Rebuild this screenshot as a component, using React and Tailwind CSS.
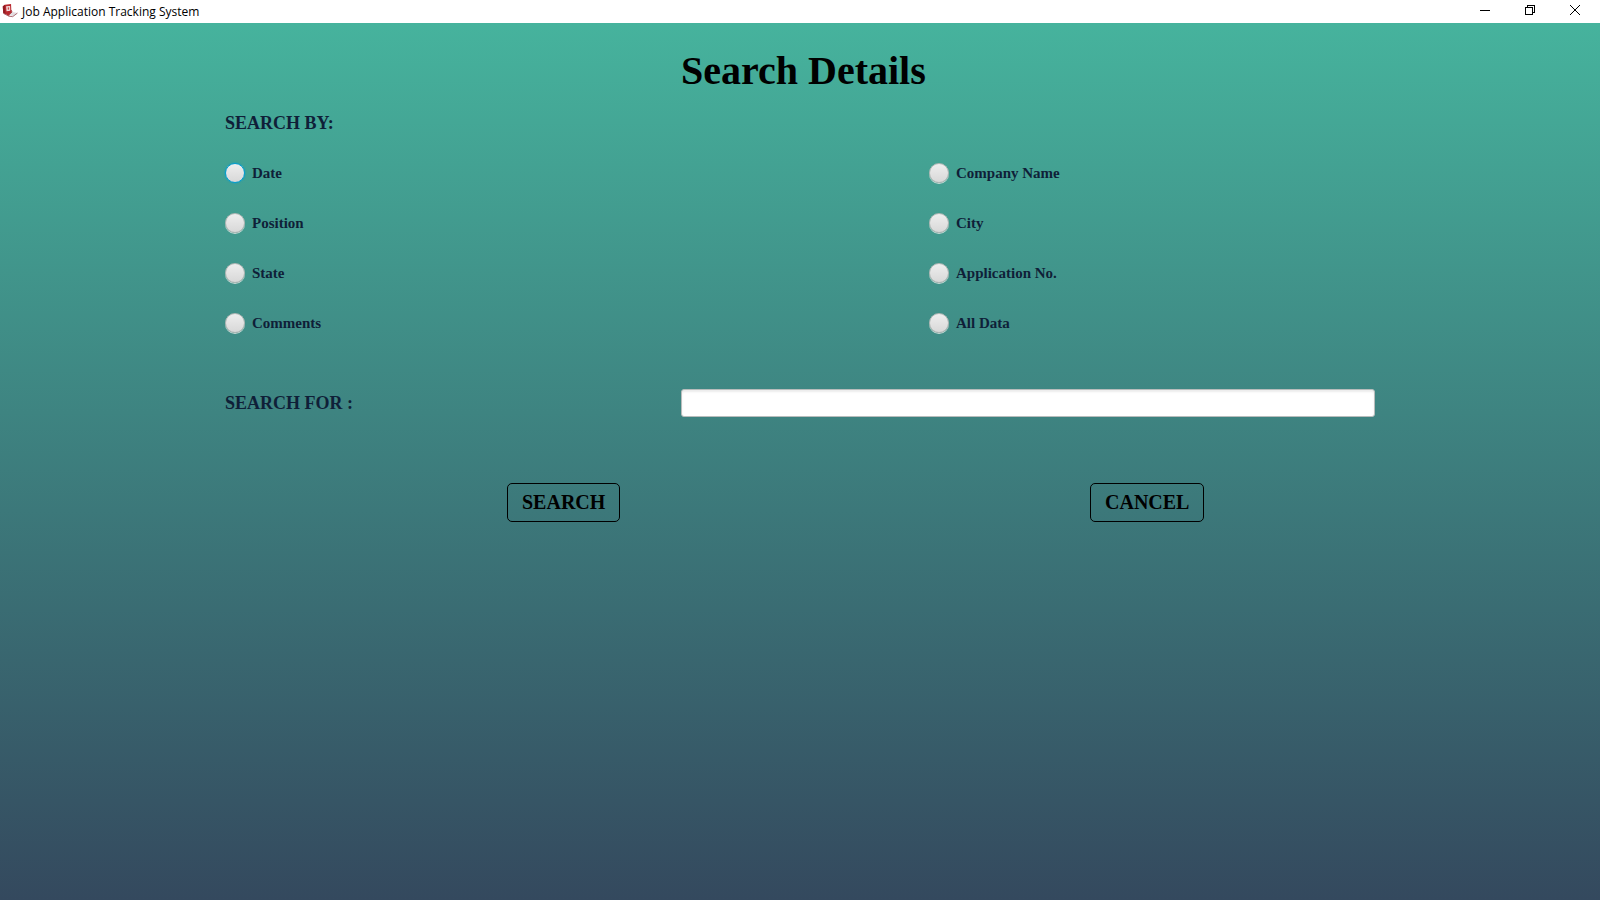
import React from "react";

const fields = [
  "Date",
  "Company Name",
  "Position",
  "City",
  "State",
  "Application No.",
  "Comments",
  "All Data",
];

function AppIcon() {
  return (
    <svg width="16" height="16" viewBox="0 0 17 16" className="-mt-[2px]" aria-hidden="true">
      <path d="M.8 3.2 3 1.4l6.6-.8.4 9.2-2.6 3.6L1.4 10.4Z" fill="#b8282e" />
      <path d="M.8 3.2 3 1.4l.6 10-2.2-1Z" fill="#8f1b22" />
      <path d="M4.4 3l4.2-.4.2 5.2-4 .4Z" fill="#f3dede" />
      <path d="M6 4.2l1.6-.2v2.4l-1.4.2Z" fill="#c9474c" />
      <path d="M7.2 12 10.8 8.8l5.6 1.4-4.8 3.4Z" fill="#e2dcdf" />
      <path d="M2 10.8l5.4 2.8 4 .4 5-3.8" fill="none" stroke="#a8686f" strokeWidth="1" />
      <path d="M9.6 7l1 2-3.4 3.2" fill="none" stroke="#a3252c" strokeWidth="1" />
    </svg>
  );
}

function TitleBar() {
  const control = "flex h-full w-[45px] items-center justify-center";
  return (
    <header className="flex h-[23px] items-center bg-white pl-[2px] text-black">
      <AppIcon />
      <span className="ml-[4px] flex-1 font-['Open_Sans','Noto_Sans',sans-serif] text-[12px] leading-[22px] font-normal">
        Job Application Tracking System
      </span>
      <div className="flex h-full pr-[3px] pb-[3px]">
        <button type="button" aria-label="Minimize" className={control}>
          <svg width="10" height="10" viewBox="0 0 10 10" shapeRendering="crispEdges">
            <path d="M0 5h10v1H0z" />
          </svg>
        </button>
        <button type="button" aria-label="Restore" className={control}>
          <svg width="10" height="10" viewBox="0 0 10 10" fill="none" stroke="black" shapeRendering="crispEdges">
            <path d="M.5 2.5h7v7h-7zM2.5 2.5v-2h7v7h-2" />
          </svg>
        </button>
        <button type="button" aria-label="Close" className={control}>
          <svg width="10" height="10" viewBox="0 0 10 10" fill="none" stroke="black">
            <path d="M0 0l10 10M10 0 0 10" />
          </svg>
        </button>
      </div>
    </header>
  );
}

function ActionButton({ children, className }) {
  return (
    <button
      type="button"
      className={
        "h-[39px] justify-self-start rounded-[5px] border border-black px-[14px] text-[20px] leading-none font-bold text-black " +
        className
      }
    >
      {children}
    </button>
  );
}

export default function App() {
  return (
    <div className="flex min-h-screen flex-col font-['Liberation_Serif',serif] font-bold text-[#0f1f38]">
      <TitleBar />
      <main className="flex-1 bg-linear-to-b/srgb from-[#46b39d] to-[#34495e] px-6">
        <form className="mx-auto w-full max-w-[1150px] pt-[23px]" onSubmit={(e) => e.preventDefault()}>
          <div className="grid grid-cols-[456fr_694fr]">
            <h1 className="col-start-2 text-[40px] leading-[50px] text-black">Search Details</h1>
          </div>
          <fieldset>
            <legend className="h-[52px] pt-[2px] text-[18px] leading-[50px]">SEARCH BY:</legend>
            <div className="grid grid-cols-[704fr_446fr]">
              {fields.map((name, i) => (
                <label key={name} className="flex h-[50px] items-center gap-[7px] text-[15px]">
                  <input
                    type="radio"
                    name="field"
                    value={name}
                    autoFocus={i === 0}
                    className="size-5 appearance-none rounded-full border border-[#b4b8b6] bg-linear-to-b from-[#eeeeee] to-[#d8d8d8] shadow-[0_1px_0_#c9dcd8] outline-none checked:border-[6px] focus:border-[#039ed3] focus:shadow-[0_0_2px_#039ed3]"
                  />
                  {name}
                </label>
              ))}
            </div>
          </fieldset>
          <div className="mt-[30px] grid h-[50px] grid-cols-[456fr_694fr] items-center">
            <label htmlFor="term" className="text-[18px]">
              SEARCH FOR :
            </label>
            <input
              id="term"
              type="text"
              className="h-7 w-full rounded-[3px] border border-[#b8bdbc] bg-white px-2 text-[15px] shadow-[inset_0_2px_2px_#ececec] outline-none"
            />
          </div>
          <div className="mt-[50px] grid h-12 grid-cols-[282fr_583fr_285fr] items-center">
            <ActionButton className="col-start-2">SEARCH</ActionButton>
            <ActionButton className="col-start-3">CANCEL</ActionButton>
          </div>
        </form>
      </main>
    </div>
  );
}
